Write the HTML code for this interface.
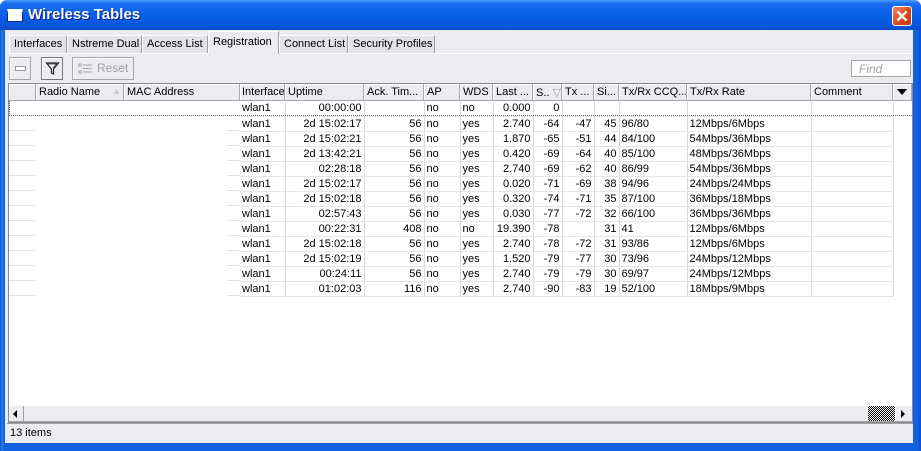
<!DOCTYPE html>
<html><head><meta charset="utf-8">
<style>
*{box-sizing:border-box;margin:0;padding:0}
body{width:921px;height:451px;overflow:hidden;background:#fff;font-family:"Liberation Sans",sans-serif;font-size:11px;color:#000;position:relative}
.abs{position:absolute}
#frame{left:0;top:0;width:921px;height:451px;background:linear-gradient(90deg,#0a4fd0,#2a7ef0 2px,#1360e0 4px,#1360e0 917px,#0a4fd0);border-radius:7px 7px 0 0}
#title{left:0;top:0;width:921px;height:30px;border-radius:7px 7px 0 0;background:linear-gradient(#4a9cff 0%,#1a6ff0 12%,#0a5ee8 50%,#0a56dc 85%,#0a4cc8 100%)}
#title span{position:absolute;left:28px;top:6px;color:#fff;font-weight:bold;font-size:15px;text-shadow:1px 1px #0a1f7a}
#ticon{left:7px;top:9px;width:16px;height:13px;background:#fff;border:1px solid #0a2a8a;border-top:4px solid #fff}
#close{left:892px;top:6px;width:20px;height:20px;border:1px solid #fff;border-radius:3px;background:linear-gradient(135deg,#f08a5c,#d3451a 60%,#c33a12)}
#body{left:5px;top:30px;width:908px;height:413px;background:#ecebf0}
.tab{position:absolute;top:35px;height:18px;background:#e3e2e8;border:1px solid #fff;border-right:1px solid #9d9da1;border-bottom:none;padding:2px 4px 0 4px;white-space:nowrap}
.tab.sel{top:31px;height:23px;background:#ecebf0;padding-top:4px;border-right:1px solid #9d9da1;z-index:2}
#tabline{left:7px;top:53px;width:905px;height:1px;background:#fff}
.btn{position:absolute;top:57px;height:23px;border:1px solid #a6a6aa;background:#ecebf0;box-shadow:inset 1px 1px #fff}
#find{left:851px;top:60px;width:60px;height:17px;background:#fff;border:1px solid #a5a5a5;color:#a0a0a0;font-style:italic;padding:1px 0 0 7px;font-size:12px}
#grid{left:8px;top:83px;width:905px;height:340px;background:#fff;border:1px solid #8a8a8e}
.hd{position:absolute;top:84px;height:17px;background:#ecebf0;border-right:1px solid #a8a8ac;border-bottom:1px solid #a8a8ac;box-shadow:inset 1px 1px #fff;padding:2px 0 0 3px;white-space:nowrap;overflow:hidden}
table{position:absolute;left:240px;top:101px;border-collapse:collapse;table-layout:fixed}
td{height:15px;border-right:1px solid #dadada;border-bottom:1px solid #e6e6e6;padding:0 2px;white-space:nowrap;overflow:hidden;line-height:14px}
td.r{text-align:right}
.gl{position:absolute;height:1px;background:#e2e2e2}
#sb{left:9px;top:405px;width:903px;height:17px;background:#ecebf0;border-top:1px solid #fff;border-bottom:1px solid #a0a0a0}
#status{left:7px;top:423px;width:906px;height:19px;background:#ecebf0;border-top:1px solid #a0a0a0;padding:3px 0 0 3px;font-size:11px}
</style></head><body>
<div id="frame" class="abs"></div>
<div id="title" class="abs"><div id="ticon" class="abs"></div><span>Wireless Tables</span>
<div id="close" class="abs"><svg width="18" height="18" viewBox="0 0 18 18"><path d="M4.5 4.5L13.5 13.5M13.5 4.5L4.5 13.5" stroke="#fff" stroke-width="2.4"/></svg></div></div>
<div id="body" class="abs"></div>

<div class="tab" style="left:9px;width:58px">Interfaces</div>
<div class="tab" style="left:67px;width:75px">Nstreme Dual</div>
<div class="tab" style="left:142px;width:66px">Access List</div>
<div class="tab sel" style="left:208px;width:71px">Registration</div>
<div class="tab" style="left:279px;width:69px">Connect List</div>
<div class="tab" style="left:348px;width:87px">Security Profiles</div>
<div id="tabline" class="abs"></div>

<div class="btn" style="left:9px;width:22px"><div class="abs" style="left:5px;top:8px;width:11px;height:5px;border:1px solid #9c9ca0;background:#fff"></div></div>
<div class="btn" style="left:41px;width:22px;border-color:#7a7a7e"><svg class="abs" style="left:3px;top:3px" width="15" height="15" viewBox="0 0 15 15"><path d="M1.5 2H13.5L8.5 8V13L6.5 12V8Z" fill="#fff" stroke="#222" stroke-width="1.2"/><path d="M3.5 3H11.5L8 7" stroke="#555" fill="none"/></svg></div>
<div class="btn" style="left:72px;width:62px;color:#a0a0a4;padding:3px 0 0 24px;font-size:12px">Reset<svg class="abs" style="left:5px;top:5px" width="15" height="12" viewBox="0 0 15 12"><circle cx="2" cy="2" r="1.3" fill="none" stroke="#a8a8ac"/><circle cx="2" cy="9" r="1.3" fill="none" stroke="#a8a8ac"/><path d="M5 2H14M5 5.5H14M5 9H14" stroke="#a8a8ac"/></svg></div>
<div id="find" class="abs">Find</div>

<div id="grid" class="abs"></div>
<div class="hd" style="left:9px;width:27px"></div>
<div class="hd" style="left:36px;width:88px">Radio Name<span style="position:absolute;left:76px;top:2px;color:#c8c8cc;font-size:9px">▲</span></div>
<div class="hd" style="left:124px;width:116px">MAC Address</div>
<div class="hd" style="left:240px;width:45px;padding-left:2px">Interface</div>
<div class="hd" style="left:285px;width:79px">Uptime</div>
<div class="hd" style="left:364px;width:60px">Ack. Tim...</div>
<div class="hd" style="left:424px;width:36px">AP</div>
<div class="hd" style="left:460px;width:33px">WDS</div>
<div class="hd" style="left:493px;width:40px">Last ...</div>
<div class="hd" style="left:533px;width:29px">S.. <span style="color:#a0a0a4">▽</span></div>
<div class="hd" style="left:562px;width:32px">Tx ...</div>
<div class="hd" style="left:594px;width:25px">Si...</div>
<div class="hd" style="left:619px;width:68px">Tx/Rx CCQ...</div>
<div class="hd" style="left:687px;width:124px">Tx/Rx Rate</div>
<div class="hd" style="left:811px;width:82px">Comment</div>
<div class="hd" style="left:893px;width:19px;padding:0"><svg class="abs" style="left:4px;top:5px" width="10" height="6"><path d="M0 0H10L5 6Z" fill="#000"/></svg></div>

<div class="abs" style="left:9px;top:101px;width:231px;height:15px;border-left:1px dotted #555"></div>
<div class="abs" style="left:9px;top:115px;width:903px;height:0;border-top:1px dotted #666;z-index:3"></div>

<div class="gl" style="left:9px;top:130px;width:27px"></div><div class="gl" style="left:227px;top:130px;width:13px"></div>
<div class="gl" style="left:9px;top:145px;width:27px"></div><div class="gl" style="left:227px;top:145px;width:13px"></div>
<div class="gl" style="left:9px;top:160px;width:27px"></div><div class="gl" style="left:227px;top:160px;width:13px"></div>
<div class="gl" style="left:9px;top:175px;width:27px"></div><div class="gl" style="left:227px;top:175px;width:13px"></div>
<div class="gl" style="left:9px;top:190px;width:27px"></div><div class="gl" style="left:227px;top:190px;width:13px"></div>
<div class="gl" style="left:9px;top:205px;width:27px"></div><div class="gl" style="left:227px;top:205px;width:13px"></div>
<div class="gl" style="left:9px;top:220px;width:27px"></div><div class="gl" style="left:227px;top:220px;width:13px"></div>
<div class="gl" style="left:9px;top:235px;width:27px"></div><div class="gl" style="left:227px;top:235px;width:13px"></div>
<div class="gl" style="left:9px;top:250px;width:27px"></div><div class="gl" style="left:227px;top:250px;width:13px"></div>
<div class="gl" style="left:9px;top:265px;width:27px"></div><div class="gl" style="left:227px;top:265px;width:13px"></div>
<div class="gl" style="left:9px;top:280px;width:27px"></div><div class="gl" style="left:227px;top:280px;width:13px"></div>
<div class="gl" style="left:9px;top:295px;width:27px"></div><div class="gl" style="left:227px;top:295px;width:13px"></div>

<table>
<colgroup><col style="width:45px"><col style="width:79px"><col style="width:60px"><col style="width:36px"><col style="width:33px"><col style="width:40px"><col style="width:29px"><col style="width:32px"><col style="width:25px"><col style="width:68px"><col style="width:124px"><col style="width:82px"></colgroup>
<tr><td>wlan1</td><td class="r">00:00:00</td><td class="r"></td><td>no</td><td>no</td><td class="r">0.000</td><td class="r">0</td><td></td><td></td><td></td><td></td><td></td></tr>
<tr><td>wlan1</td><td class="r">2d 15:02:17</td><td class="r">56</td><td>no</td><td>yes</td><td class="r">2.740</td><td class="r">-64</td><td class="r">-47</td><td class="r">45</td><td>96/80</td><td>12Mbps/6Mbps</td><td></td></tr>
<tr><td>wlan1</td><td class="r">2d 15:02:21</td><td class="r">56</td><td>no</td><td>yes</td><td class="r">1.870</td><td class="r">-65</td><td class="r">-51</td><td class="r">44</td><td>84/100</td><td>54Mbps/36Mbps</td><td></td></tr>
<tr><td>wlan1</td><td class="r">2d 13:42:21</td><td class="r">56</td><td>no</td><td>yes</td><td class="r">0.420</td><td class="r">-69</td><td class="r">-64</td><td class="r">40</td><td>85/100</td><td>48Mbps/36Mbps</td><td></td></tr>
<tr><td>wlan1</td><td class="r">02:28:18</td><td class="r">56</td><td>no</td><td>yes</td><td class="r">2.740</td><td class="r">-69</td><td class="r">-62</td><td class="r">40</td><td>86/99</td><td>54Mbps/36Mbps</td><td></td></tr>
<tr><td>wlan1</td><td class="r">2d 15:02:17</td><td class="r">56</td><td>no</td><td>yes</td><td class="r">0.020</td><td class="r">-71</td><td class="r">-69</td><td class="r">38</td><td>94/96</td><td>24Mbps/24Mbps</td><td></td></tr>
<tr><td>wlan1</td><td class="r">2d 15:02:18</td><td class="r">56</td><td>no</td><td>yes</td><td class="r">0.320</td><td class="r">-74</td><td class="r">-71</td><td class="r">35</td><td>87/100</td><td>36Mbps/18Mbps</td><td></td></tr>
<tr><td>wlan1</td><td class="r">02:57:43</td><td class="r">56</td><td>no</td><td>yes</td><td class="r">0.030</td><td class="r">-77</td><td class="r">-72</td><td class="r">32</td><td>66/100</td><td>36Mbps/36Mbps</td><td></td></tr>
<tr><td>wlan1</td><td class="r">00:22:31</td><td class="r">408</td><td>no</td><td>no</td><td class="r">19.390</td><td class="r">-78</td><td class="r"></td><td class="r">31</td><td>41</td><td>12Mbps/6Mbps</td><td></td></tr>
<tr><td>wlan1</td><td class="r">2d 15:02:18</td><td class="r">56</td><td>no</td><td>yes</td><td class="r">2.740</td><td class="r">-78</td><td class="r">-72</td><td class="r">31</td><td>93/86</td><td>12Mbps/6Mbps</td><td></td></tr>
<tr><td>wlan1</td><td class="r">2d 15:02:19</td><td class="r">56</td><td>no</td><td>yes</td><td class="r">1.520</td><td class="r">-79</td><td class="r">-77</td><td class="r">30</td><td>73/96</td><td>24Mbps/12Mbps</td><td></td></tr>
<tr><td>wlan1</td><td class="r">00:24:11</td><td class="r">56</td><td>no</td><td>yes</td><td class="r">2.740</td><td class="r">-79</td><td class="r">-79</td><td class="r">30</td><td>69/97</td><td>24Mbps/12Mbps</td><td></td></tr>
<tr><td>wlan1</td><td class="r">01:02:03</td><td class="r">116</td><td>no</td><td>yes</td><td class="r">2.740</td><td class="r">-90</td><td class="r">-83</td><td class="r">19</td><td>52/100</td><td>18Mbps/9Mbps</td><td></td></tr>
</table>

<div id="sb" class="abs">
<div class="abs" style="left:0;top:0;width:15px;height:15px;border-right:1px solid #a0a0a0"><svg class="abs" style="left:4px;top:4px" width="5" height="8"><path d="M4 0V8L0 4Z" fill="#000"/></svg></div>
<div class="abs" style="left:859px;top:0;width:27px;height:15px;background-color:#fff;background-image:repeating-conic-gradient(#000 0 25%,#fff 0 50%);background-size:2px 2px"></div>
<div class="abs" style="left:886px;top:0;width:15px;height:15px;border-left:1px solid #fff"><svg class="abs" style="left:5px;top:4px" width="5" height="8"><path d="M0 0V8L4 4Z" fill="#000"/></svg></div>
</div>
<div id="status" class="abs">13 items</div>
</body></html>
